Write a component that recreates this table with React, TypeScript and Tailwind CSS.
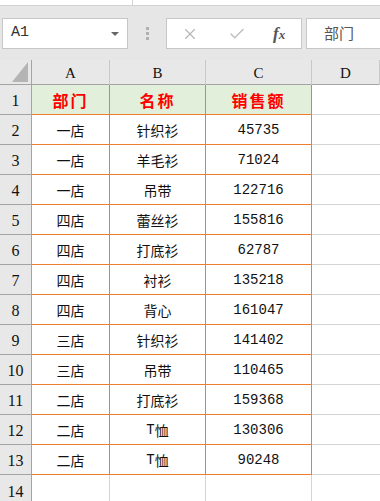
import { X, Check } from "lucide-react";

const rows: [string, string, string][] = [
  ["一店", "针织衫", "45735"],
  ["一店", "羊毛衫", "71024"],
  ["一店", "吊带", "122716"],
  ["四店", "蕾丝衫", "155816"],
  ["四店", "打底衫", "62787"],
  ["四店", "衬衫", "135218"],
  ["四店", "背心", "161047"],
  ["三店", "针织衫", "141402"],
  ["三店", "吊带", "110465"],
  ["二店", "打底衫", "159368"],
  ["二店", "T恤", "130306"],
  ["二店", "T恤", "90248"],
];

const cjk = { fontFamily: "'Noto Sans CJK SC', sans-serif" };
const mono = { fontFamily: "'Liberation Mono', monospace" };
const serif = { fontFamily: "'Liberation Serif', 'Noto Sans CJK SC', serif" };
const cols = "grid grid-cols-[32px_78px_96px_106px_1fr]";

export default function App() {
  return (
    <div className="h-[501px] w-[380px] overflow-hidden bg-[#e6e6e6] text-[#111]">
      {/* top strip */}
      <div className="flex h-[6px] border-b border-[#d2d2d2] bg-white">
        <div className="w-[133px] border-r border-[#d2d2d2]" />
      </div>

      {/* formula bar */}
      <div className="flex h-[54px] items-start pt-[12px]">
        <div className="ml-[2px] flex h-[31px] w-[126px] items-center justify-between border border-[#c6c6c6] bg-white pl-[8px] pr-[8px]">
          <span className="text-[15px] text-[#333]" style={mono}>A1</span>
          <span className="h-0 w-0 border-x-[4px] border-t-[4px] border-x-transparent border-t-[#666]" />
        </div>
        <div className="flex w-[38px] flex-col items-center gap-[2px] pt-[9px]">
          <span className="h-[3px] w-[3px] bg-[#b0b0b0]" />
          <span className="h-[3px] w-[3px] bg-[#b0b0b0]" />
          <span className="h-[3px] w-[3px] bg-[#b0b0b0]" />
        </div>
        <div className="flex h-[31px] w-[136px] items-center border border-[#c6c6c6] bg-white">
          <X size={18} strokeWidth={1.5} className="ml-[14px] text-[#b4b4b4]" />
          <Check size={18} strokeWidth={2} className="ml-[29px] text-[#c0c0c0]" />
          <span className="ml-[27px] text-[17px] font-bold italic text-[#555]" style={serif}>
            f<span className="text-[13px]">x</span>
          </span>
        </div>
        <div className="ml-[4px] flex h-[31px] flex-1 items-center border border-r-0 border-[#c6c6c6] bg-white pl-[17px]">
          <span className="text-[15px] text-[#555]" style={cjk}>部门</span>
        </div>
      </div>

      {/* column headers */}
      <div className={`${cols} h-[25px] border-b border-[#a4a4a4] bg-[#e8e8e8]`}>
        <div className="relative border-r border-[#a4a4a4]">
          <div className="absolute bottom-[3px] right-[3px] h-0 w-0 border-b-[20px] border-l-[16px] border-b-[#b4b4b4] border-l-transparent" />
        </div>
        {["A", "B", "C", "D"].map((c) => (
          <div key={c} className="flex items-center justify-center border-r border-[#c8c8c8] pt-[2px] text-[15px]" style={serif}>
            {c}
          </div>
        ))}
      </div>

      {/* body */}
      <div className="bg-white">
        <div className={`${cols} h-[30px]`}>
          <div className="flex items-center justify-center border-r border-b border-[#a4a4a4] bg-[#e8e8e8] pt-[3px] text-[16px]" style={serif}>1</div>
          {["部门", "名称", "销售额"].map((h) => (
            <div key={h} className="flex items-center justify-center border-r border-b border-[#ed7d31] bg-[#e2efda] pt-[1px] text-[16px] font-bold tracking-[2px] text-[#ff0000]" style={cjk}>
              {h}
            </div>
          ))}
          <div className="border-b border-[#d4d4d4]" />
        </div>
        {rows.map((r, i) => (
          <div key={i} className={`${cols} h-[30px]`}>
            <div className="flex items-center justify-center border-r border-b border-[#a4a4a4] bg-[#e8e8e8] pt-[3px] text-[16px]" style={serif}>
              {i + 2}
            </div>
            <div className="flex items-center justify-center border-r border-b border-[#ed7d31] pt-[2px] text-[14px]" style={cjk}>{r[0]}</div>
            <div className="flex items-center justify-center border-r border-b border-[#ed7d31] pt-[2px] text-[14px]" style={cjk}>
              {r[1].startsWith("T") ? (
                <>
                  <span style={mono}>T</span>
                  {r[1].slice(1)}
                </>
              ) : (
                r[1]
              )}
            </div>
            <div className="flex items-center justify-center border-r border-b border-[#ed7d31] pt-[2px] text-[14px]" style={mono}>{r[2]}</div>
            <div className="border-b border-[#d4d4d4]" />
          </div>
        ))}
        <div className={`${cols} h-[30px]`}>
          <div className="flex items-center justify-center border-r border-[#a4a4a4] bg-[#e8e8e8] pt-[3px] text-[16px]" style={serif}>14</div>
          <div className="border-r border-[#d4d4d4]" />
          <div className="border-r border-[#d4d4d4]" />
          <div className="border-r border-[#d4d4d4]" />
          <div />
        </div>
      </div>
    </div>
  );
}
